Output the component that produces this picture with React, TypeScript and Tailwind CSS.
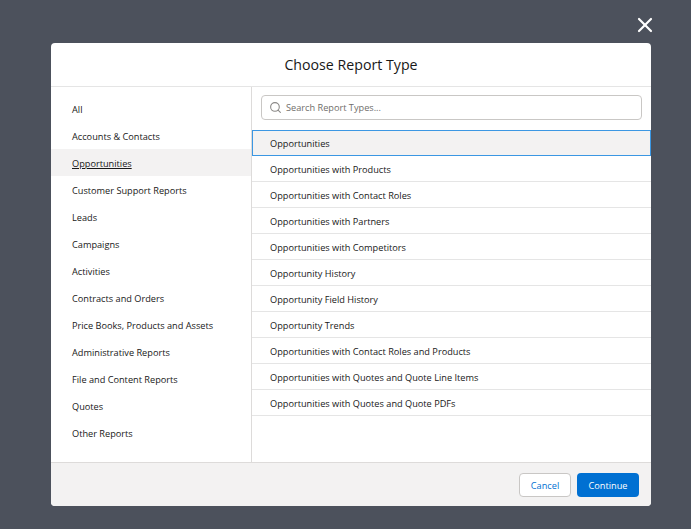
import { Search, X } from 'lucide-react';

const categories = [
  'All',
  'Accounts & Contacts',
  'Opportunities',
  'Customer Support Reports',
  'Leads',
  'Campaigns',
  'Activities',
  'Contracts and Orders',
  'Price Books, Products and Assets',
  'Administrative Reports',
  'File and Content Reports',
  'Quotes',
  'Other Reports',
];

const reportTypes = [
  'Opportunities',
  'Opportunities with Products',
  'Opportunities with Contact Roles',
  'Opportunities with Partners',
  'Opportunities with Competitors',
  'Opportunity History',
  'Opportunity Field History',
  'Opportunity Trends',
  'Opportunities with Contact Roles and Products',
  'Opportunities with Quotes and Quote Line Items',
  'Opportunities with Quotes and Quote PDFs',
];

export default function App() {
  return (
    <div className="relative h-[529px] w-[691px] overflow-hidden bg-[#4c515c] pt-[43px] pl-[51px] font-['Open_Sans',sans-serif] text-[9.2px] text-[#181818]">
      <button className="absolute top-[13px] left-[633px] text-white" aria-label="Close">
        <X size={24} strokeWidth={2.2} />
      </button>

      <div className="flex h-[463px] w-[600px] flex-col overflow-hidden rounded-[4px] bg-white">
        <div className="flex h-[44px] shrink-0 items-center justify-center border-b border-[#e5e5e5] text-[14.2px]">
          Choose Report Type
        </div>

        <div className="flex min-h-0 flex-1">
          <div className="w-[201px] shrink-0 border-r border-[#dddbda] pt-[8px]">
            {categories.map((name) => (
              <div
                key={name}
                className={`flex h-[27px] items-center pt-[2px] pl-[21px] ${name === 'Opportunities' ? 'bg-[#f3f2f2] underline' : ''}`}
              >
                {name}
              </div>
            ))}
          </div>

          <div className="min-w-0 flex-1">
            <div className="flex h-[43px] items-start px-[9px] pt-[8px]">
              <div className="flex h-[25px] w-full items-center gap-[4px] rounded-[4px] border border-[#c9c7c5] bg-white pl-[7px] text-[#706e6b]">
                <Search size={13} strokeWidth={2} className="text-[#8a8886]" />
                <span>Search Report Types...</span>
              </div>
            </div>
            {reportTypes.map((name, i) => (
              <div
                key={name}
                className={
                  i === 0
                    ? 'flex h-[26px] items-center border border-[#3b97e3] bg-[#f3f2f2] pt-[2px] pl-[17px]'
                    : 'flex h-[26px] items-center border-b border-[#e5e5e5] pt-[2px] pl-[18px]'
                }
              >
                {name}
              </div>
            ))}
          </div>
        </div>

        <div className="flex h-[44px] shrink-0 items-center justify-end gap-[6px] border-t border-[#dddbda] bg-[#f3f2f2] pr-[12px]">
          <button className="h-[24px] w-[52px] rounded-[4px] border border-[#c9c7c5] bg-white pt-[2px] text-[#0070d2]">
            Cancel
          </button>
          <button className="h-[24px] w-[62px] rounded-[4px] bg-[#0070d2] pt-[2px] text-white">Continue</button>
        </div>
      </div>
    </div>
  );
}
